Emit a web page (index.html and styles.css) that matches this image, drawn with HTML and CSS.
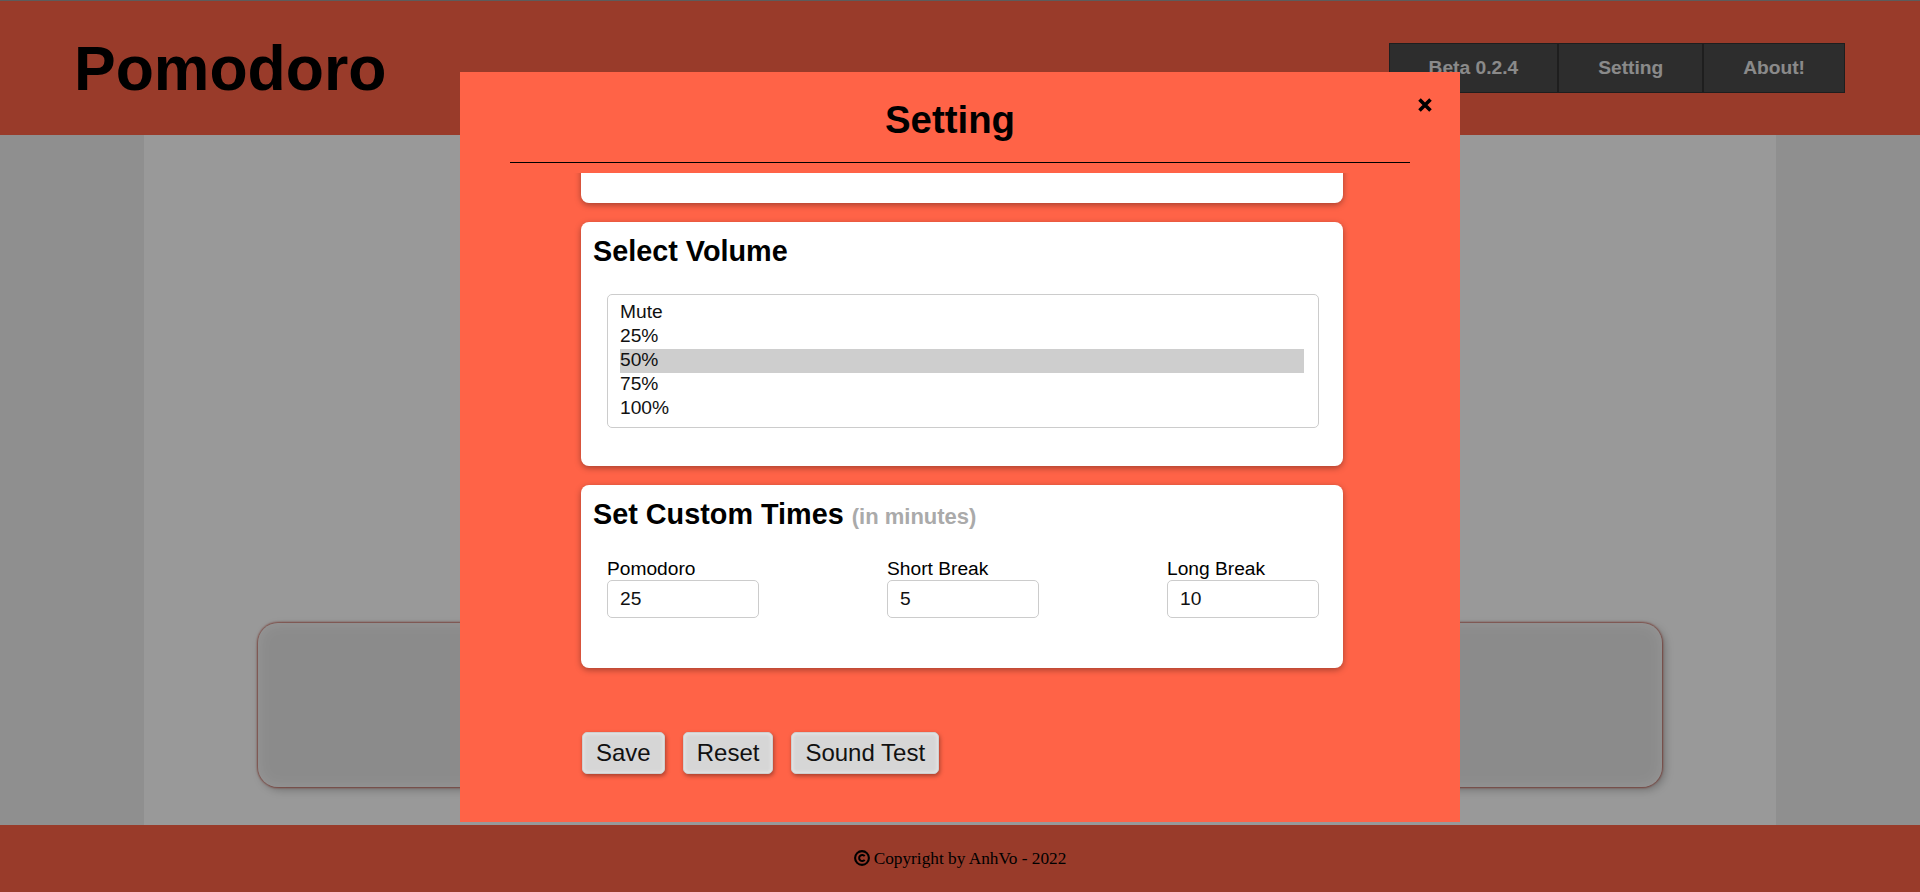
FILE: index.html
```html
<!DOCTYPE html>
<html lang="en">
<head>
<meta charset="utf-8">
<title>Pomodoro</title>
<link rel="stylesheet" href="styles.css">
</head>
<body>
<header class="site-header">
  <h1 class="logo">Pomodoro</h1>
  <nav class="nav">
    <a class="nav-btn">Beta 0.2.4</a>
    <a class="nav-btn">Setting</a>
    <a class="nav-btn">About!</a>
  </nav>
</header>

<main class="main">
  <div class="column">
    <div class="timer-area"></div>
    <div class="task-card"></div>
  </div>
</main>

<footer class="site-footer">
  <svg class="copy-icon" width="16" height="16" viewBox="0 0 16 16" aria-hidden="true">
    <circle cx="8" cy="8" r="6.9" fill="none" stroke="#000" stroke-width="2.1"/>
    <path d="M10.7 6.1 A3.1 3.1 0 1 0 10.7 9.9" fill="none" stroke="#000" stroke-width="2"/>
  </svg>
  <span>Copyright by AnhVo - 2022</span>
</footer>

<div class="overlay"></div>

<div class="modal">
  <div class="modal-header">
    <h2 class="modal-title">Setting</h2>
    <button class="modal-close" aria-label="Close">
      <svg width="16" height="16" viewBox="0 0 16 16" aria-hidden="true">
        <path d="M2.5 2.5 L13.5 13.5 M13.5 2.5 L2.5 13.5" stroke="#000" stroke-width="3.6" fill="none"/>
      </svg>
    </button>
  </div>
  <hr class="modal-rule">
  <div class="modal-body">
    <div class="modal-scroll">
      <section class="card card-sound"></section>
      <section class="card">
        <h3 class="card-title">Select Volume</h3>
        <div class="volume-wrap">
          <select class="volume-select" size="5">
            <option>Mute</option>
            <option>25%</option>
            <option selected>50%</option>
            <option>75%</option>
            <option>100%</option>
          </select>
        </div>
      </section>
      <section class="card">
        <h3 class="card-title">Set Custom Times <span class="card-sub">(in minutes)</span></h3>
        <div class="fields">
          <div class="field">
            <label class="field-label">Pomodoro</label>
            <input class="field-input" type="text" value="25">
          </div>
          <div class="field">
            <label class="field-label">Short Break</label>
            <input class="field-input" type="text" value="5">
          </div>
          <div class="field">
            <label class="field-label">Long Break</label>
            <input class="field-input" type="text" value="10">
          </div>
        </div>
      </section>
    </div>
  </div>
  <div class="modal-actions">
    <button class="action-btn">Save</button>
    <button class="action-btn">Reset</button>
    <button class="action-btn">Sound Test</button>
  </div>
</div>
</body>
</html>
```

FILE: styles.css
```css
* { box-sizing: border-box; }

html, body { height: 100%; }

body {
  margin: 0;
  font-family: "Liberation Sans", Arial, sans-serif;
  font-size: 19.2px;
  color: #000;
  display: flex;
  flex-direction: column;
  overflow: hidden;
}

/* Header */
.site-header {
  flex: 0 0 auto;
  height: 135px;
  border-top: 1px solid #999;
  background: #ff6347;
  display: flex;
  align-items: center;
  justify-content: space-between;
  padding: 0 75px 0 74px;
}

.logo {
  margin: 0;
  font-size: 62.5px;
  font-weight: bold;
  line-height: normal;
}

.nav { display: flex; }

.nav-btn {
  display: block;
  height: 50px;
  line-height: 48px;
  padding: 0 39px;
  background: #4b4b4b;
  border: 1px solid #333;
  color: #e6e6e6;
  font-weight: bold;
  font-size: 19.2px;
  text-decoration: none;
}

/* Main */
.main {
  flex: 1 1 auto;
  background: #eee;
}

.column {
  width: 85%;
  height: 100%;
  margin: 0 auto;
  background: #fff;
  display: flex;
  flex-direction: column;
  align-items: center;
}

.timer-area { height: 488px; flex: 0 0 auto; }

.task-card {
  width: 86%;
  height: 164px;
  border-radius: 20px;
  background: #e8e8e8;
  box-shadow: 0 0 2px 1px rgba(190, 75, 60, 0.75),
              3px 3px 8px rgba(0, 0, 0, 0.25),
              inset 0 0 14px rgba(255, 255, 255, 0.9);
}

/* Footer */
.site-footer {
  flex: 0 0 auto;
  height: 67px;
  background: #ff6347;
  display: flex;
  align-items: center;
  justify-content: center;
  gap: 4px;
  font-family: "Liberation Serif", "Times New Roman", serif;
  font-size: 17.3px;
}

.copy-icon { display: block; margin-top: -1px; }

/* Overlay + modal */
.overlay {
  position: fixed;
  inset: 0;
  background: rgba(0, 0, 0, 0.4);
  z-index: 10;
}

.modal {
  position: fixed;
  top: 72px;
  left: calc(50% - 500px);
  width: 1000px;
  height: 750px;
  background: #ff6347;
  z-index: 20;
  display: flex;
  flex-direction: column;
}

.modal-header {
  position: relative;
  padding-top: 26px;
}

.modal-title {
  margin: 0;
  padding-right: 20px;
  text-align: center;
  font-size: 38.4px;
  font-weight: bold;
  line-height: normal;
}

.modal-close {
  position: absolute;
  top: 25px;
  right: 27px;
  width: 16px;
  height: 16px;
  padding: 0;
  border: 0;
  background: none;
}

.modal-close svg { display: block; }

.modal-rule {
  margin: 20px 50px 0;
  border: 0;
  border-top: 1px solid #000;
  height: 0;
}

.modal-body {
  margin-top: 10px;
  height: 513px;
  overflow: hidden;
  flex: 0 0 auto;
}

.modal-scroll { margin-top: -120px; }

.card {
  display: flow-root;
  width: 762px;
  margin: 0 0 19px 121px;
  background: #fff;
  border-radius: 8px;
  padding: 13px 12px 0;
  box-shadow: 0 2px 6px rgba(0, 0, 0, 0.35);
}

.card-sound { height: 150px; }

.card-title {
  margin: 0;
  font-size: 28.8px;
  font-weight: bold;
  line-height: normal;
}

.card-sub {
  font-size: 22px;
  color: #aaa;
}

.volume-wrap { margin: 26px 12px 38px 14px; }

.volume-select {
  display: block;
  width: 100%;
  padding: 6px 14px 6px 12px;
  border: 1px solid #ccc;
  border-radius: 5px;
  font-family: "Liberation Sans", Arial, sans-serif;
  font-size: 19.2px;
  color: #111;
  background: #fff;
  outline: none;
  overflow: hidden;
}

.volume-select option {
  padding: 0;
  line-height: 24px;
  height: 24px;
  color: #111;
}

.volume-select option:checked {
  background: linear-gradient(#cecece, #cecece);
  color: #111;
}

.fields {
  display: flex;
  justify-content: space-between;
  margin: 27px 12px 50px 14px;
}

.field-label {
  display: block;
  font-size: 19.2px;
  line-height: 22px;
}

.field-input {
  display: block;
  width: 152px;
  height: 38px;
  padding: 0 12px;
  border: 1px solid #ccc;
  border-radius: 5px;
  font-family: "Liberation Sans", Arial, sans-serif;
  font-size: 19.2px;
  color: #111;
  outline: none;
}

.modal-actions {
  display: flex;
  gap: 18px;
  padding: 46px 0 0 122px;
}

.action-btn {
  font-family: "Liberation Sans", Arial, sans-serif;
  font-size: 24px;
  line-height: normal;
  padding: 6px 13px;
  border: 1px solid #cfcfcf;
  border-radius: 5px;
  background: #d6d6d6;
  color: #111;
  box-shadow: 1px 2px 4px rgba(0, 0, 0, 0.35), inset 0 0 4px rgba(255, 255, 255, 0.6);
}
```
